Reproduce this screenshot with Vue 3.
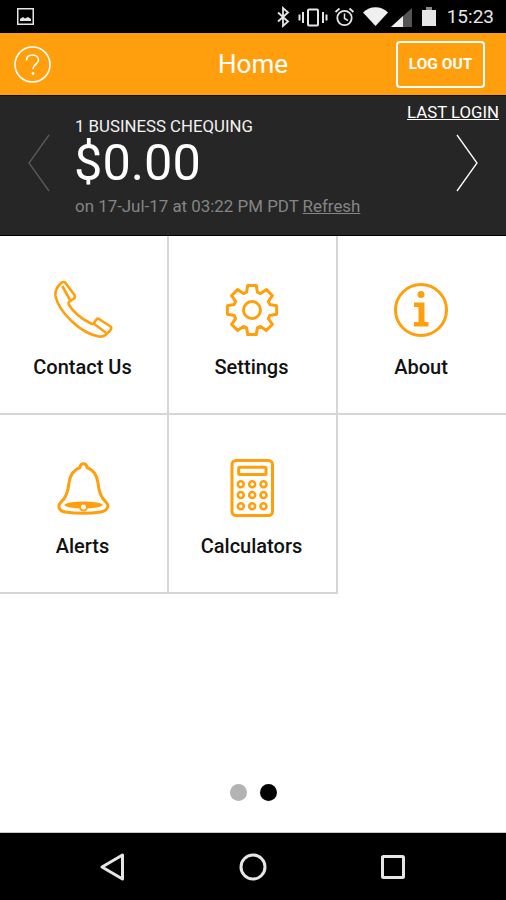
<template>
  <div class="screen">
    <div class="status-bar">
      <svg class="status-photo" width="17" height="17" viewBox="0 0 17 17">
        <rect x="0.75" y="0.75" width="15.5" height="15.5" fill="none" stroke="#e6e6e6" stroke-width="1.5" />
        <path d="M3 13V11L6 9L8 10.5L11 9L14 11V13Z" fill="#e6e6e6" />
      </svg>
      <div class="status-right">
        <!-- bluetooth, vibrate, alarm, wifi, signal, battery -->
        <svg width="162" height="33" viewBox="0 0 162 33">
          <path d="M3 12.5L13 21.5L8 26V8L13 12.5L3 21.5" fill="none" stroke="#e6e6e6" stroke-width="1.8" />
          <rect x="33" y="9.5" width="10" height="16" rx="1" fill="none" stroke="#e6e6e6" stroke-width="2" />
          <path d="M28 12V23M48 12V23" stroke="#e6e6e6" stroke-width="2" />
          <path d="M24.5 14.5V20.5M51.5 14.5V20.5" stroke="#e6e6e6" stroke-width="2" />
          <circle cx="69.5" cy="18" r="7.2" fill="none" stroke="#e6e6e6" stroke-width="1.8" />
          <path d="M69.5 13.5V18.5L73 20.5" fill="none" stroke="#e6e6e6" stroke-width="1.5" />
          <path d="M60.5 12L64.5 8.5M78.5 12L74.5 8.5" stroke="#e6e6e6" stroke-width="1.8" />
          <path d="M88 12.5C95 5.5 106 5.5 113 12.5L100.5 26Z" fill="#f0f0f0" />
          <path d="M116 27L137 8V27Z" fill="#555" />
          <path d="M116 27L128 16V27Z" fill="#f0f0f0" />
          <rect x="147" y="10" width="14" height="16" fill="#e6e6e6" />
          <rect x="151" y="7" width="6" height="3" fill="#8a8a8a" />
        </svg>
        <span class="clock">15:23</span>
      </div>
    </div>

    <header class="app-header">
      <svg class="help" width="37" height="37" viewBox="0 0 37 37">
        <circle cx="18.5" cy="18.5" r="17.5" fill="none" stroke="#fff" stroke-width="1.6" />
        <path d="M12.5 14.5C12.5 11 15 9 18.5 9C22 9 24.5 11 24.5 14C24.5 18 19 18.5 19 23" fill="none" stroke="#fff" stroke-width="1.6" />
        <circle cx="19" cy="27.5" r="1.4" fill="#fff" />
      </svg>
      <div class="title">Home</div>
      <button class="logout">LOG OUT</button>
    </header>

    <section class="account">
      <a class="last-login">LAST LOGIN</a>
      <svg class="chevron" width="22" height="58" viewBox="0 0 22 58">
        <path d="M21 1L1 29L21 57" fill="none" stroke="#5a5a5a" stroke-width="1.3" />
      </svg>
      <div class="account-text">
        <div class="account-name">1 BUSINESS CHEQUING</div>
        <div class="balance">$0.00</div>
        <div class="updated">on 17-Jul-17 at 03:22 PM PDT <u>Refresh</u></div>
      </div>
      <svg class="chevron" width="22" height="58" viewBox="0 0 22 58">
        <path d="M1 1L21 29L1 57" fill="none" stroke="#fff" stroke-width="1.3" />
      </svg>
    </section>

    <main class="content">
      <div class="grid">
        <div class="cell">
          <svg class="icon phone" width="64" height="64" viewBox="0 0 64 64">
            <path d="M10 5Q12.5 3 14.5 5L23.5 17Q24.5 19 23 20.5L18 24Q17 25 18 27C23 35 31 41 40 45.5Q42 46.5 43 45L45 42Q46 40 48 41L59.5 48.5Q61 50 59.5 52C56 56 53 59.5 48 58.5C29 55 8 34 4.5 18C3.5 12 7 8 10 5Z" />
            <path d="M11.3 8L19 22M42.3 45.3L55 54.7" />
          </svg>
          <span>Contact Us</span>
        </div>
        <div class="cell">
          <svg class="icon" width="64" height="64" viewBox="0 0 64 64">
            <path :d="gearPath" />
            <circle cx="32" cy="32" r="8.5" />
          </svg>
          <span>Settings</span>
        </div>
        <div class="cell last">
          <svg class="icon" width="64" height="64" viewBox="0 0 64 64">
            <circle cx="32" cy="32" r="25.5" />
            <circle class="solid" cx="32" cy="16.5" r="3.5" />
            <path class="solid" d="M25 24.5H35.5V44H39.5V48.5H25V44H29.5V29H25Z" />
          </svg>
          <span>About</span>
        </div>
        <div class="cell">
          <svg class="icon" width="64" height="64" viewBox="0 0 64 64">
            <path d="M29 10.5C29 5.5 36 5.5 36 10.5C43 13 46 18 47 26C48 36 50 41 55 45C59 49 56 54 50 55C40 56.5 24 56.5 14 55C8 54 6 49 10 45C15 41 17 36 18 26C19 18 22 13 29 10.5Z" />
            <ellipse class="solid" cx="32.5" cy="48" rx="19" ry="3.5" />
            <circle class="bell-clapper" cx="32.5" cy="50" r="3.5" />
          </svg>
          <span>Alerts</span>
        </div>
        <div class="cell">
          <svg class="icon" width="64" height="64" viewBox="0 0 64 64">
            <rect x="12" y="3.5" width="40.5" height="55" rx="4" />
            <rect x="18.7" y="10.2" width="27.3" height="7.3" rx="1" />
            <circle v-for="(k, i) in calcKeys" :key="i" class="key" :cx="k.x" :cy="k.y" r="3" />
          </svg>
          <span>Calculators</span>
        </div>
      </div>
      <div class="dots">
        <span class="dot"></span>
        <span class="dot active"></span>
      </div>
    </main>

    <nav class="nav-bar">
      <svg width="40" height="40" viewBox="0 0 40 40">
        <path d="M29.5 8V32L9 20Z" />
      </svg>
      <svg width="40" height="40" viewBox="0 0 40 40">
        <circle cx="20" cy="20" r="12" />
      </svg>
      <svg width="40" height="40" viewBox="0 0 40 40">
        <rect x="9.5" y="9.5" width="21" height="21" rx="1" />
      </svg>
    </nav>
  </div>
</template>

<script setup>
// 8 tooth gear outline, centred in the 64 box
const buildGear = () => {
  const points = [];
  for (let i = 0; i < 8; i++) {
    const a = (i * Math.PI) / 4 - Math.PI / 2;
    const at = (r, off) => {
      const x = 32 + r * Math.cos(a + off);
      const y = 32 + r * Math.sin(a + off);
      return x.toFixed(1) + ' ' + y.toFixed(1);
    };
    points.push(at(18.5, -0.3), at(25, -0.17), at(25, 0.17), at(18.5, 0.3));
  }
  return 'M' + points.join('L') + 'Z';
};
const gearPath = buildGear();

const calcKeys = [];
for (const y of [27.3, 38, 49.3]) {
  for (const x of [20.8, 32.2, 43.5]) {
    calcKeys.push({ x, y });
  }
}
</script>

<style>
html,
body {
  margin: 0;
  background: #fff;
}
</style>

<style scoped>
.screen {
  width: 506px;
  height: 900px;
  display: flex;
  flex-direction: column;
  overflow: hidden;
  font-family: Roboto, "Liberation Sans", sans-serif;
  background: #fff;
}

.status-bar {
  height: 33px;
  flex: none;
  background: #000;
  display: flex;
  align-items: center;
  justify-content: space-between;
  padding: 0 12px 0 17px;
}

.status-right {
  display: flex;
  align-items: center;
  gap: 10px;
}

.clock {
  color: #e6e6e6;
  font-size: 19px;
  line-height: 33px;
}

.app-header {
  height: 62px;
  flex: none;
  background: #ff9f0e;
  border-bottom: 1px solid #111;
  display: grid;
  grid-template-columns: 1fr auto 1fr;
  align-items: center;
  padding: 0 14px;
}

.title {
  color: #fff;
  font-size: 26px;
}

.logout {
  justify-self: end;
  margin-right: 7px;
  width: 89px;
  height: 47px;
  padding: 0;
  background: none;
  border: 2px solid #fff;
  border-radius: 4px;
  color: #fff;
  font-family: inherit;
  font-size: 15.5px;
  font-weight: 700;
}

.account {
  position: relative;
  height: 139px;
  flex: none;
  background: #262626;
  border-bottom: 1px solid #000;
  display: flex;
  align-items: center;
  justify-content: space-between;
  padding: 0 28px;
}

.last-login {
  position: absolute;
  top: 6px;
  right: 7px;
  color: #fff;
  font-size: 16.8px;
  line-height: 20px;
  text-decoration: underline;
}

.chevron {
  flex: none;
  margin-bottom: 5px;
}

.account-text {
  flex: 1;
  padding-left: 25px;
}

.account-name {
  color: #f2f2f2;
  font-size: 16.8px;
  line-height: 20px;
  margin-top: 1px;
}

.balance {
  color: #fff;
  font-size: 50.5px;
  line-height: 54px;
  margin-left: -1px;
}

.updated {
  color: #858585;
  font-size: 16.9px;
  line-height: 20px;
  margin-top: 6px;
}

.content {
  flex: 1;
  display: flex;
  flex-direction: column;
  border-bottom: 1px solid #c8c8c8;
}

.grid {
  display: grid;
  grid-template-columns: 169px 169px 168px;
  grid-auto-rows: 179px;
}

.cell {
  display: flex;
  flex-direction: column;
  align-items: center;
  padding-top: 42px;
  padding-right: 2px;
  box-sizing: border-box;
  border-right: 2px solid #d6d6d6;
  border-bottom: 2px solid #d6d6d6;
  color: #111;
  font-size: 20px;
  font-weight: 500;
  line-height: 22px;
}

.cell.last {
  border-right: none;
}

.icon {
  margin-bottom: 14px;
  fill: none;
  stroke: #ff9f0e;
  stroke-width: 3;
  stroke-linejoin: round;
}

.icon .solid {
  fill: #ff9f0e;
  stroke: none;
}

.icon .key {
  stroke-width: 2.5;
}

.phone {
  stroke-width: 2.6;
}

.bell-clapper {
  fill: #fff;
  stroke-width: 2;
}

.dots {
  margin-top: auto;
  margin-bottom: 31px;
  display: flex;
  justify-content: center;
  gap: 13px;
}

.dot {
  width: 17px;
  height: 17px;
  border-radius: 50%;
  background: #b3b3b3;
}

.dot.active {
  background: #000;
}

.nav-bar {
  height: 67px;
  flex: none;
  background: #000;
  display: flex;
  align-items: center;
  justify-content: center;
  gap: 100px;
}

.nav-bar svg {
  fill: none;
  stroke: #e6e6e6;
  stroke-width: 3;
  stroke-linejoin: round;
}
</style>
